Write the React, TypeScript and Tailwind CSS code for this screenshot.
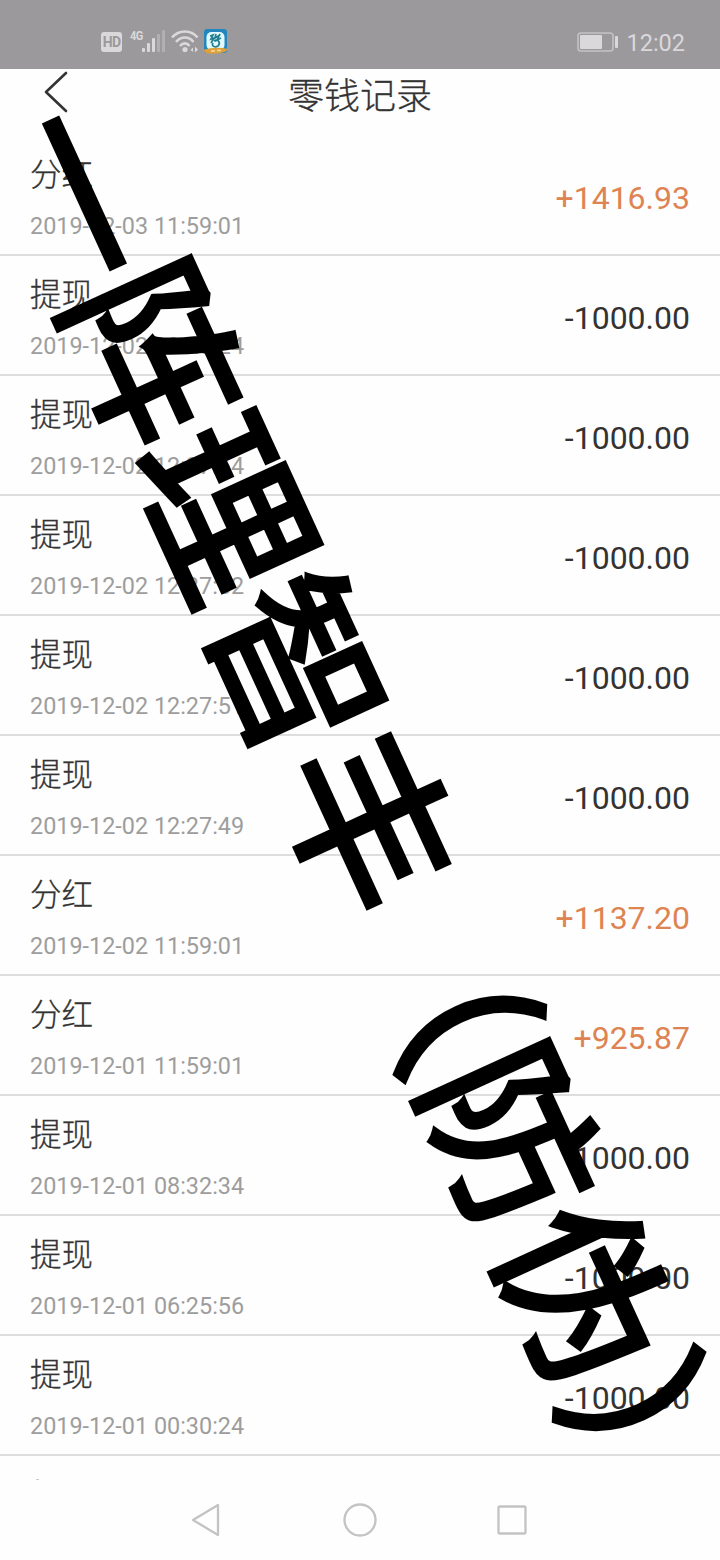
import { ReactNode } from 'react';

type Entry = {
	title: string;
	date: string;
	amount: string;
};

const entries: Entry[] = [
	{ title: '分红', date: '2019-12-03 11:59:01', amount: '+1416.93' },
	{ title: '提现', date: '2019-12-02 12:28:24', amount: '-1000.00' },
	{ title: '提现', date: '2019-12-02 12:27:54', amount: '-1000.00' },
	{ title: '提现', date: '2019-12-02 12:27:52', amount: '-1000.00' },
	{ title: '提现', date: '2019-12-02 12:27:51', amount: '-1000.00' },
	{ title: '提现', date: '2019-12-02 12:27:49', amount: '-1000.00' },
	{ title: '分红', date: '2019-12-02 11:59:01', amount: '+1137.20' },
	{ title: '分红', date: '2019-12-01 11:59:01', amount: '+925.87' },
	{ title: '提现', date: '2019-12-01 08:32:34', amount: '-1000.00' },
	{ title: '提现', date: '2019-12-01 06:25:56', amount: '-1000.00' },
	{ title: '提现', date: '2019-12-01 00:30:24', amount: '-1000.00' },
];

function StatusBar() {
	return (
		<div className="h-[69px] shrink-0 bg-[#9c999c] flex items-center justify-between pl-[101px] pr-[35px] pt-[15px] text-[#dad8da]">
			<div className="flex items-center">
				<div className="w-[21px] h-[20px] rounded-[3px] bg-[#dad8da] text-[#9c999c] text-[14px] leading-none tracking-tighter font-bold flex items-center justify-center">HD</div>
				<div className="relative ml-[7px] w-[37px] h-[24px]">
					<span className="absolute left-[1px] -top-px text-[13px] leading-none font-bold tracking-tighter origin-left scale-x-85">4G</span>
					<svg className="absolute left-0 top-0" width="37" height="24" viewBox="0 0 37 24">
						<g fill="#dad8da">
							<rect x="13" y="18" width="3" height="4" rx="1" />
							<rect x="18" y="13" width="3" height="9" rx="1" />
							<rect x="23" y="8" width="3" height="14" rx="1" />
						</g>
						<g fill="#b3b0b3">
							<rect x="28" y="4" width="3" height="18" rx="1" />
							<rect x="33" y="0" width="3" height="22" rx="1" />
						</g>
					</svg>
				</div>
				<svg className="ml-[5px]" width="28" height="24" viewBox="0 0 28 24" fill="none" stroke="#dad8da" strokeWidth="2.6">
					<path d="M1 7.500C8 -0.500 20 -0.500 26.500 7.500" />
					<path d="M5 12C10 6 18 6 22.500 12" />
					<path d="M9 16C12 12.500 16 12.500 18.500 16" />
					<circle cx="14" cy="19.500" r="2.600" fill="#dad8da" stroke="none" />
					<path d="M22 17.500V22L19.500 20ZM24 16.500V22.500L27 19.500Z" fill="#dad8da" stroke="none" />
				</svg>
				<svg className="ml-[4px]" width="25" height="26" viewBox="0 0 25 26">
					<rect x="1" y="0" width="23" height="24" rx="3" fill="#2387bd" />
					<rect x="3.500" y="3" width="18" height="18" rx="5" fill="#e2fafb" />
					<path d="M7 7L10 6L8 10L11 9L8 14M13 5L12 9L17 6M17 5L14 11L18 9M11 12C15 9 18 14 15 17C12 19 8 17 10 14" fill="none" stroke="#237f92" strokeWidth="1.700" />
					<path d="M0 21Q12 17 25 20L22 23Q12 26 3 24Z" fill="#dfa03b" />
					<path d="M8 22H12M14 21.500H18" stroke="#f6dc9c" strokeWidth="1.300" />
				</svg>
			</div>
			<div className="flex items-center">
				<svg width="42" height="20" viewBox="0 0 42 20">
					<rect x="1" y="1" width="35" height="18" rx="3" fill="none" stroke="#c4c2c4" strokeWidth="1.600" />
					<rect x="3" y="3" width="22" height="14" rx="1" fill="#dad8da" />
					<rect x="38" y="4" width="3" height="12" rx="1" fill="#dad8da" />
				</svg>
				<span className="ml-[7px] pt-[3px] text-[23.500px] leading-none">12:02</span>
			</div>
		</div>
	);
}

function Header() {
	return (
		<div className="relative h-[67px] shrink-0 flex justify-center">
			<svg className="absolute left-[42px] top-[2px]" width="28" height="42" viewBox="0 0 28 42" fill="none" stroke="#333333" strokeWidth="2.600" strokeLinecap="round" strokeLinejoin="round">
				<path d="M24 2L4 21L24 40" />
			</svg>
			<h1 className="h-[58px] text-[36px] leading-[56px] font-light text-[#333333] [-webkit-text-stroke:0.3px_#333333]">零钱记录</h1>
		</div>
	);
}

function Row({ title, date, amount }: Entry) {
	return (
		<div className="h-[120px] shrink-0 border-b-2 border-[#dddddd] px-[30px] flex items-center justify-between">
			<div className="flex flex-col pt-[4px]">
				<div className="text-[31.500px] leading-[46px] font-light text-[#333333] [-webkit-text-stroke:0.3px_#333333]">{title}</div>
				<div className="mt-[11px] text-[23.400px] leading-[32px] text-[#9d9d9d]">{date}</div>
			</div>
			<div className={amount.startsWith('+') ? 'pt-[6px] text-[32px] text-[#dd8452]' : 'pt-[6px] text-[32px] text-[#333333]'}>{amount}</div>
		</div>
	);
}

function NavButton({ children }: { children: ReactNode }) {
	return (
		<button className="w-[152px] h-[80px] flex items-center justify-center">
			<svg width="36" height="36" viewBox="0 0 36 36" fill="none" stroke="#c3c3c3" strokeWidth="2.300" strokeLinejoin="round">
				{children}
			</svg>
		</button>
	);
}

function Watermark() {
	return (
		<div className="absolute left-[120px] top-[82px] origin-top-left rotate-[65.400deg] whitespace-nowrap text-[172.500px] leading-[174px] font-normal text-black pointer-events-none [-webkit-text-stroke:5px_black]">
			一阵理智丰（防伪）
		</div>
	);
}

function App() {
	return (
		<div className="relative w-[720px] h-[1560px] bg-[#fefefe] overflow-hidden flex flex-col font-[Roboto,'Noto_Sans_CJK_SC',sans-serif]">
			<StatusBar />
			<Header />
			<div className="h-[1344px] shrink-0 overflow-hidden flex flex-col">
				{entries.map((entry) => (
					<Row key={entry.date} {...entry} />
				))}
				{/* top edge of the next row */}
				<div className="mt-[23px] ml-[36px] w-[3px] h-px bg-[#cccccc]" />
			</div>
			<div className="h-[80px] shrink-0 flex justify-center">
				<NavButton>
					<path d="M27.500 3V33L2.500 18Z" transform="translate(0.500 0)" />
				</NavButton>
				<NavButton>
					<circle cx="18" cy="18" r="15.500" />
				</NavButton>
				<NavButton>
					<rect x="4.500" y="4.500" width="27" height="27" rx="1.500" />
				</NavButton>
			</div>
			<Watermark />
		</div>
	);
}

export default App;
